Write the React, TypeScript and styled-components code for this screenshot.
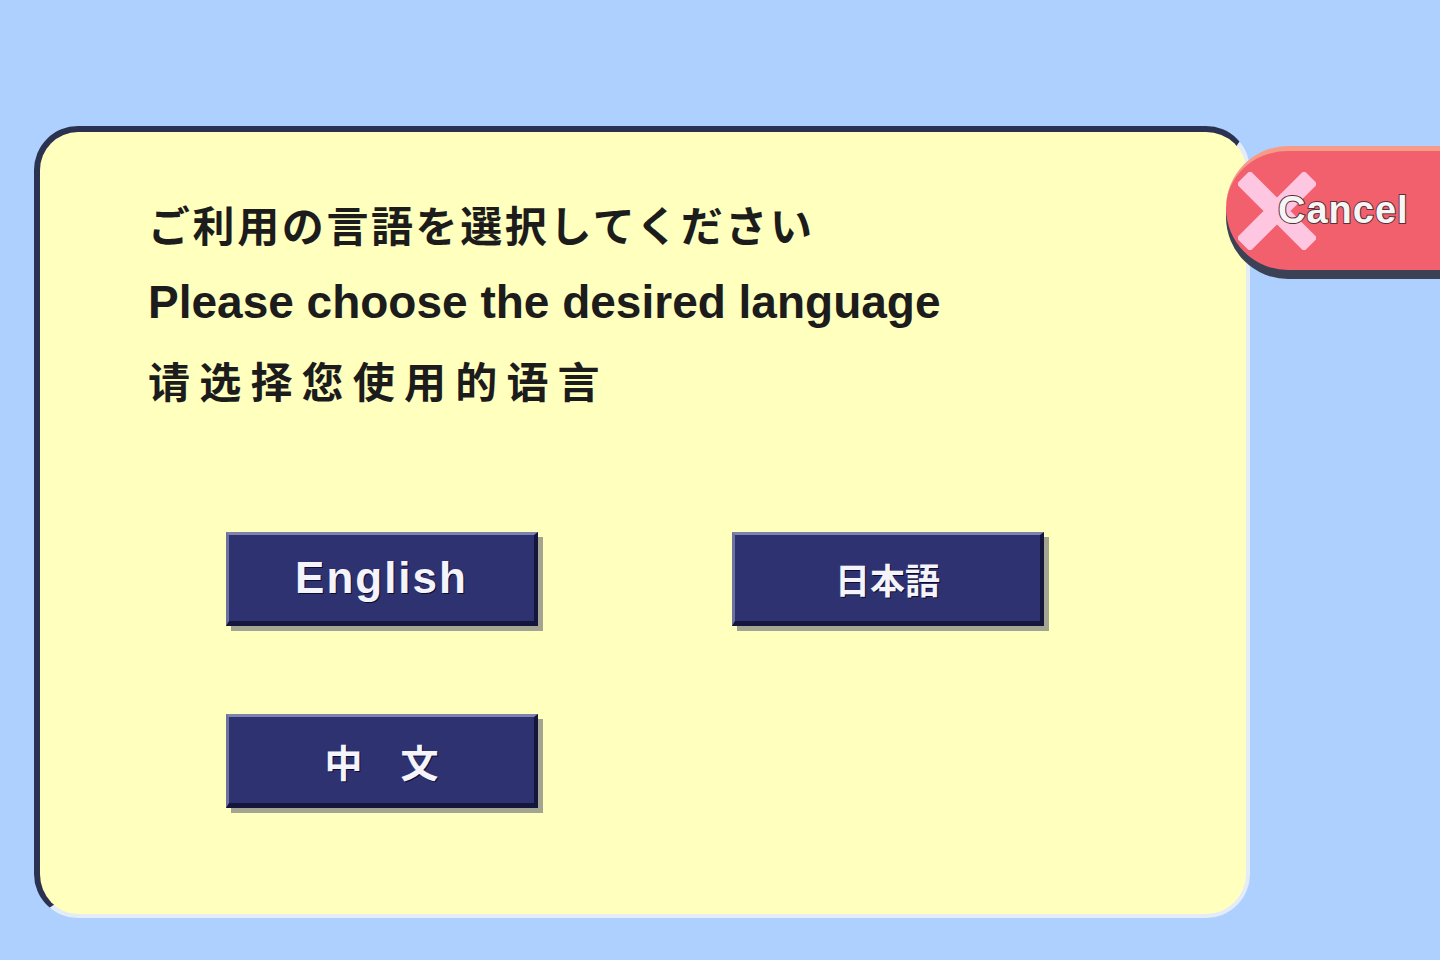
import styled, { createGlobalStyle } from "styled-components";

const GlobalStyle = createGlobalStyle`
  html, body {
    margin: 0;
    padding: 0;
    background: #aed0fe;
    overflow: hidden;
  }
  body {
    font-family: "Liberation Sans", Arial, "Noto Sans CJK JP", sans-serif;
  }
`;

const Screen = styled.div`
  width: 1440px;
  height: 960px;
  box-sizing: border-box;
  padding: 126px 0 0 34px;
  display: flex;
  align-items: flex-start;
`;

const Panel = styled.div`
  flex: 0 0 auto;
  width: 1216px;
  height: 792px;
  box-sizing: border-box;
  padding: 53px 0 0 108px;
  background: #ffffbe;
  border-radius: 44px;
  border-top: 6px solid #2b3150;
  border-left: 6px solid #2b3150;
  border-right: 4px solid #e4ecf8;
  border-bottom: 4px solid #e4ecf8;
`;

const Prompt = styled.div<{ $lang: "ja" | "en" | "zh" }>`
  height: 78px;
  line-height: 78px;
  color: #1c1c1c;
  font-weight: 700;
  white-space: nowrap;
  font-family: ${(p) =>
    p.$lang === "en"
      ? `"Liberation Sans", Arial, sans-serif`
      : p.$lang === "zh"
      ? `"Noto Sans CJK SC", sans-serif`
      : `"Noto Sans CJK JP", sans-serif`};
  font-size: ${(p) => (p.$lang === "en" ? 46 : 42)}px;
  letter-spacing: ${(p) => (p.$lang === "zh" ? 9.2 : p.$lang === "ja" ? 2.6 : 0)}px;
`;

const Choices = styled.div`
  margin: 113px 0 0 78px;
  display: grid;
  grid-template-columns: 312px 312px;
  column-gap: 194px;
  row-gap: 88px;
`;

const LangButton = styled.button<{ $size?: number; $cjk?: boolean }>`
  width: 312px;
  height: 94px;
  box-sizing: border-box;
  padding: 0;
  background: #2f3270;
  border-top: 3px solid #7f83ac;
  border-left: 3px solid #6d719e;
  border-right: 4px solid #14163c;
  border-bottom: 5px solid #14163c;
  box-shadow: 5px 5px 0 rgba(90, 90, 110, 0.55);
  color: #f4f4fa;
  font-weight: 700;
  font-family: ${(p) =>
    p.$cjk
      ? `"Noto Sans CJK JP", "Noto Sans CJK SC", sans-serif`
      : `"Liberation Sans", Arial, sans-serif`};
  font-size: ${(p) => p.$size ?? 44}px;
  letter-spacing: ${(p) => (p.$cjk ? 0 : 2)}px;
  white-space: pre;
  text-shadow: 1px 1px 0 #0c0c30;
  cursor: pointer;
`;

const CancelTab = styled.button`
  flex: 0 0 auto;
  margin: 20px 0 0 -24px;
  width: 240px;
  height: 124px;
  box-sizing: border-box;
  padding: 0 0 0 12px;
  display: flex;
  align-items: center;
  background: #f2606e;
  border: none;
  border-top: 5px solid #f79a86;
  border-radius: 62px 0 0 62px;
  box-shadow: 0 9px 0 #3b4256;
  cursor: pointer;
`;

const CancelMark = styled.svg`
  flex: 0 0 auto;
  width: 78px;
  height: 78px;
`;

const CancelLabel = styled.span`
  margin-left: -38px;
  color: #f6f6f6;
  font-family: "Liberation Sans", Arial, sans-serif;
  font-weight: 700;
  font-size: 38px;
  letter-spacing: 1px;
  -webkit-text-stroke: 2px #5a2f36;
  paint-order: stroke fill;
`;

export default function App() {
  return (
    <>
      <GlobalStyle />
      <Screen>
        <Panel>
          <Prompt $lang="ja">ご利用の言語を選択してください</Prompt>
          <Prompt $lang="en">Please choose the desired language</Prompt>
          <Prompt $lang="zh">请选择您使用的语言</Prompt>
          <Choices>
            <LangButton>English</LangButton>
            <LangButton $cjk $size={35}>
              日本語
            </LangButton>
            <LangButton $cjk $size={38}>
              中　文
            </LangButton>
          </Choices>
        </Panel>
        <CancelTab>
          <CancelMark viewBox="0 0 78 78">
            <path
              d="M12 12 L66 66 M66 12 L12 66"
              stroke="#ffc6e2"
              strokeWidth="19"
              strokeLinecap="square"
            />
          </CancelMark>
          <CancelLabel>Cancel</CancelLabel>
        </CancelTab>
      </Screen>
    </>
  );
}
